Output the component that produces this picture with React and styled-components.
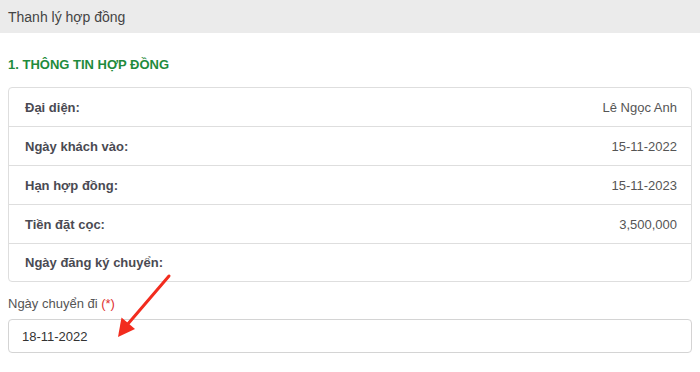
import React from 'react'
import styled, { createGlobalStyle } from 'styled-components'

const Global = createGlobalStyle`
  body {
    margin: 0;
    background: #fff;
    font-family: "Liberation Sans", Arial, sans-serif;
  }
`

const Page = styled.div`
  position: relative;
  width: 700px;
  height: 372px;
  overflow: hidden;
`

const TopBar = styled.header`
  height: 33px;
  background: #ebebeb;
  display: flex;
  align-items: center;
  padding: 0 8px;
  font-size: 14px;
  color: #444;
`

const Body = styled.div`
  padding: 0 8px;
`

const SectionTitle = styled.h3`
  margin: 0;
  padding: 24px 0 14px;
  font-size: 13px;
  font-weight: bold;
  color: #1f8b3c;
  line-height: 16px;
`

const Card = styled.div`
  border: 1px solid #dedede;
  border-radius: 4px;
`

const Row = styled.div`
  display: flex;
  justify-content: space-between;
  align-items: center;
  height: 38px;
  padding: 0 14px 0 16px;
  font-size: 13px;
  & + & {
    border-top: 1px solid #dedede;
  }
  &:last-child {
    height: 37px;
  }
`

const Label = styled.span`
  font-weight: bold;
  color: #4a4a52;
`

const Value = styled.span`
  color: #555;
`

const Field = styled.div`
  margin-top: 14px;
`

const FieldLabel = styled.label`
  display: block;
  font-size: 13px;
  color: #555;
  margin-bottom: 8px;
`

const Required = styled.span`
  color: #e03030;
`

const Input = styled.div`
  height: 32px;
  border: 1px solid #d4d4d4;
  border-radius: 4px;
  display: flex;
  align-items: center;
  padding: 0 13px;
  font-size: 13px;
  color: #333;
`

const Arrow = styled.svg`
  position: absolute;
  left: 0;
  top: 0;
  pointer-events: none;
`

const rows = [
  ['Đại diện:', 'Lê Ngọc Anh'],
  ['Ngày khách vào:', '15-11-2022'],
  ['Hạn hợp đồng:', '15-11-2023'],
  ['Tiền đặt cọc:', '3,500,000'],
  ['Ngày đăng ký chuyển:', ''],
]

export default function App() {
  return (
    <Page>
      <Global />
      <TopBar>Thanh lý hợp đồng</TopBar>
      <Body>
        <SectionTitle>1. THÔNG TIN HỢP ĐỒNG</SectionTitle>
        <Card>
          {rows.map(([k, v]) => (
            <Row key={k}>
              <Label>{k}</Label>
              <Value>{v}</Value>
            </Row>
          ))}
        </Card>
        <Field>
          <FieldLabel>
            Ngày chuyển đi <Required>(*)</Required>
          </FieldLabel>
          <Input>18-11-2022</Input>
        </Field>
      </Body>
      <Arrow width="700" height="372" viewBox="0 0 700 372">
        <line x1="169" y1="276" x2="127" y2="325" stroke="#f22c1e" strokeWidth="3" strokeLinecap="round" />
        <polygon points="118,337 121.5,317.5 135,329" fill="#f22c1e" />
      </Arrow>
    </Page>
  )
}
